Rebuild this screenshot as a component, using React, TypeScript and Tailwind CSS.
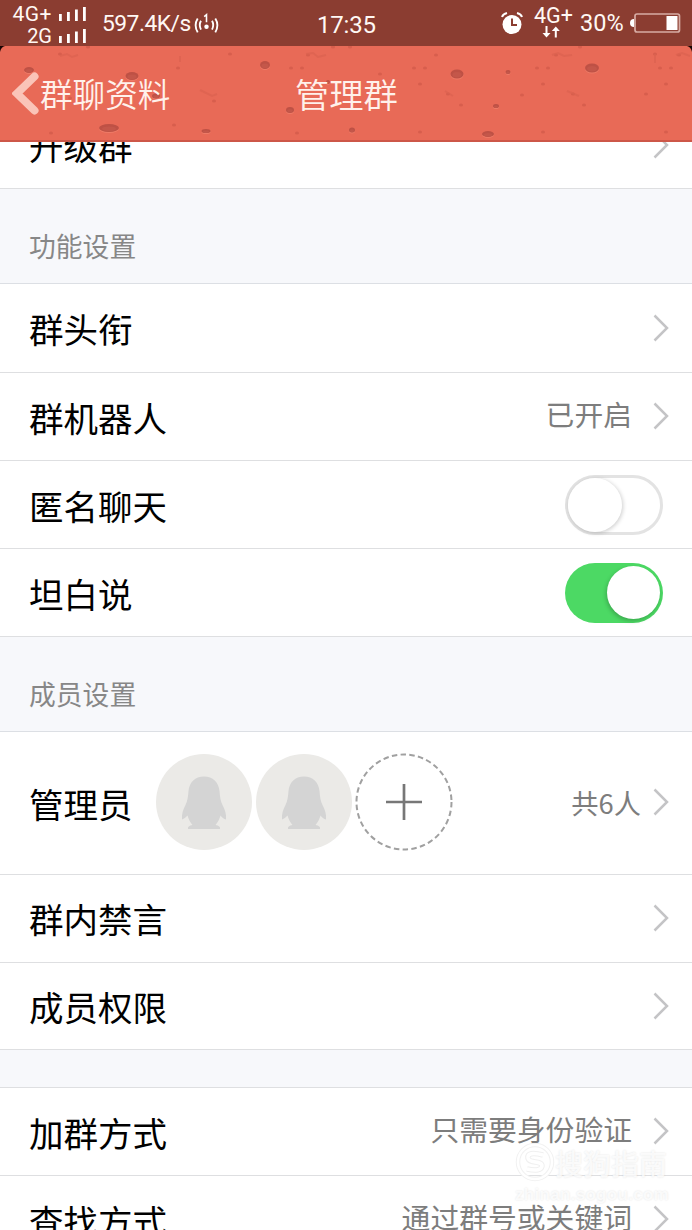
import React from "react";
import clsx from "clsx";

type RowProps = {
  label: string;
  className: string;
  value?: string;
  valueClass?: string;
  arrow?: boolean;
  children?: React.ReactNode;
};

const Chevron = () => (
  <svg width="18" height="28" viewBox="0 0 18 28" fill="none" className="shrink-0">
    <path d="M2.500 1.500L15 14L2.500 26.500" stroke="#c4c4c6" strokeWidth="2.500" />
  </svg>
);

const Row = ({ label, className, value, valueClass, arrow = true, children }: RowProps) => (
  <div className={clsx("flex shrink-0 items-center border-b border-[#dedfe1] bg-white pl-[29px]", className)}>
    <span className="pt-px text-[34.5px] leading-none text-black">{label}</span>
    {children}
    {arrow && (
      <div className="ml-auto flex items-center pr-[22px]">
        {value && (
          <span className={clsx("leading-none text-[#7d7d7d]", valueClass ?? "mr-[20px] pb-[5px] text-[28.8px]")}>
            {value}
          </span>
        )}
        <Chevron />
      </div>
    )}
  </div>
);

const Section = ({ title }: { title: string }) => (
  <div className="flex h-[95px] shrink-0 items-center border-b border-[#dcdfe4] bg-[#f7f8fb] pt-[21px] pl-[29px] text-[26.8px] leading-none text-[#878787]">
    {title}
  </div>
);

const Toggle = ({ on = false }: { on?: boolean }) => (
  <div
    className={clsx(
      "mr-[29px] ml-auto flex h-[60px] w-[98px] items-center rounded-full",
      on ? "justify-end bg-[#4cd964] pr-[3px]" : "border-[3px] border-[#e3e3e3] bg-white",
    )}
  >
    <div
      className={clsx(
        "rounded-full bg-white",
        on ? "size-[53px] shadow-[-1px_2px_4px_rgba(0,0,0,0.22)]" : "size-[54px] shadow-[1px_1px_4px_rgba(0,0,0,0.2)]",
      )}
    />
  </div>
);

const Avatar = () => (
  <svg width="96" height="96" viewBox="0 0 96 96">
    <circle cx="48" cy="48" r="48" fill="#ebeae7" />
    <path
      d="M48 22.500C39 22.500 33.500 28 32.500 37C32 43 31.500 47 29.500 51C27 56 25.500 60 26 65.500C28 65 30.500 62.500 31.500 61.500C32.500 65 34 68 36.500 71C33 71.500 31.500 73 32 75H64C64.500 73 63 71.500 59.500 71C62 68 63.500 65 64.500 61.500C65.500 63 68 65 70 65.500C70.500 60 69 56 66.500 51C64.500 47 64 43 63.500 37C62.500 28 57 22.500 48 22.500z"
      fill="#d4d4d4"
    />
  </svg>
);

const AddButton = () => (
  <svg width="98" height="98" viewBox="0 0 98 98" fill="none">
    <circle cx="49" cy="49" r="47.500" stroke="#a0a0a0" strokeWidth="2" strokeDasharray="5.500 3.300" />
    <path d="M31 49H67M49 31V67" stroke="#777" strokeWidth="2.700" />
  </svg>
);

const Signal = () => (
  <svg width="27" height="14" viewBox="0 0 27 14" fill="#fff">
    <path d="M0 7h2.800v7H0zM8 5h2.800v9H8zM16 2.500h2.800V14H16zM24 0h2.800v14H24z" />
  </svg>
);

const StatusBar = () => (
  <div className="relative flex h-[46px] shrink-0 items-center bg-[#8b3d31] font-[Roboto,sans-serif] text-[#fff8f4]">
    <div className="flex w-[86px] flex-col items-end gap-[2px] pt-[4px]">
      <div className="flex items-center gap-[7px] text-[21px] leading-[20px]">
        <span className="tracking-[0.500px]">4G+</span>
        <Signal />
      </div>
      <div className="flex items-center gap-[7px] text-[20px] leading-[20px]">
        2G <Signal />
      </div>
    </div>
    <span className="ml-[16px] w-[87px] pt-[2px] text-[22.800px] leading-none tracking-[-0.500px]">597.4K/s</span>
    <svg width="25" height="22" viewBox="0 0 27 22" fill="none" stroke="#fff" strokeWidth="2" className="mt-[2px] ml-[5px]">
      <path d="M7.500 7.500Q5 12 7.500 17M4 5Q-.500 12 4 20M19.500 7.500Q22 12 19.500 17M23 5Q27.500 12 23 20" />
      <path d="M11 3L13.500 1V9" strokeWidth="1.700" />
      <circle cx="13.500" cy="14" r="2.400" fill="#fff" stroke="none" />
    </svg>
    <span className="absolute top-[13px] left-[317px] text-[24px] leading-none tracking-[-0.200px]">17:35</span>
    <div className="ml-auto flex items-center pr-[11px]">
      <svg width="22" height="23" viewBox="0 0 22 23" fill="none">
        <circle cx="11" cy="12.500" r="9.500" fill="#fff" />
        <path d="M1 5Q2 2 6 1M21 5Q20 2 16 1" stroke="#fff" strokeWidth="2" />
        <path d="M11 6.500V13H16" stroke="#8b3d31" strokeWidth="2" />
      </svg>
      <div className="ml-[10px] flex w-[41px] flex-col items-center pb-[3px]">
        <span className="text-[21.500px] leading-[20px]">4G+</span>
        <svg width="18" height="12" viewBox="0 0 18 12" fill="#fff" className="mr-[6px]">
          <path d="M3.500 0h2v7H8.500L4.500 11.500.500 7h3zM12.800 11.500h2V5h3L13.800.500 9.800 5h3z" />
        </svg>
      </div>
      <span className="ml-[6px] w-[45px] pt-[2px] text-[23.500px] leading-none">30%</span>
      <svg width="51" height="20" viewBox="0 0 51 20" fill="none" className="ml-[5px]">
        <path d="M4 6v8Q0 14 0 10T4 6z" fill="#fff" />
        <rect x="5" y="1" width="44.500" height="18" rx="2" stroke="#d7aca4" strokeWidth="1.700" />
        <rect x="36.500" y="3" width="11" height="14" fill="#fff" />
      </svg>
    </div>
  </div>
);

// x, y, rx, ry of the craters in the header skin
const craters = [
  [29, 24, 5, 3],
  [132, 30, 6.5, 4],
  [109, 82, 10, 4],
  [206, 85, 4.5, 2],
  [265, 19, 5, 4],
  [290, 64, 4, 3],
  [352, 84, 3, 2.5],
  [328, 36, 2, 2],
  [457, 28, 6.5, 4.5],
  [508, 26, 2.5, 2],
  [496, 60, 3, 2],
  [488, 88, 6, 3],
  [592, 22, 7, 4.5],
  [156, 50, 4, 2.5],
];

const specks = [
  [60, 8], [88, 1], [178, 22], [163, 39], [70, 52], [128, 50], [51, 87], [174, 79], [230, 8], [214, 55],
  [302, 22], [308, 9], [333, 1], [291, 22], [297, 87], [380, 28], [420, 38], [448, 48], [425, 22], [414, 22],
  [420, 86], [350, 1], [436, 9], [548, 22], [537, 22], [543, 38], [556, 9], [573, 48], [584, 59], [543, 86],
  [671, 22], [660, 22], [666, 38], [679, 9], [646, 48], [666, 86], [580, 1], [655, 8], [522, 49], [461, 59],
];

const Header = () => (
  <div className="relative h-[96px] shrink-0 border-b-2 border-[#cd5748] bg-[#e86a57] text-[#fff1eb]">
    <svg width="692" height="95" viewBox="0 0 692 95" className="absolute inset-0">
      {craters.map(([x, y, rx, ry], i) => (
        <g key={i}>
          <ellipse cx={x} cy={y + 1} rx={rx} ry={ry} fill="#ee7b67" />
          <ellipse cx={x} cy={y} rx={rx} ry={ry} fill="#be5145" />
          <ellipse cx={x} cy={y + 0.8} rx={rx * 0.7} ry={ry * 0.6} fill="#c4574a" />
        </g>
      ))}
      {specks.map(([x, y], i) => (
        <ellipse key={i} cx={x} cy={y} rx="2" ry="1.500" fill="#d75e4d" />
      ))}
      <g stroke="#dc6250" strokeWidth="2" fill="none" opacity=".7">
        <path d="M60 10l7-2 5 3 6-2M306 8l7-1 5 4 8-2M552 9l6-2 6 3 8-1M676 9l6-2 8 3M200 44l12 6 5-2M445 45l8 5M567 45l12 5M180 10v6M655 8v9" />
      </g>
      <path d="M0 0H5Q1 1 0 6zM692 0h-5q4 1 5 6z" fill="#180504" />
    </svg>
    <div className="relative flex h-full items-center">
      <svg width="28" height="44" viewBox="0 0 28 44" fill="none" className="ml-[12px]">
        <path d="M22.500 5.500L5 22.500L22.500 39.500" stroke="#fac4b8" strokeWidth="8" strokeLinecap="round" strokeLinejoin="miter" />
      </svg>
      <span className="pt-px text-[32.600px] leading-none font-[350]">群聊资料</span>
      <span className="absolute left-[295px] text-[34.300px] leading-none font-[350]">管理群</span>
    </div>
  </div>
);

const Watermark = () => (
  <div className="absolute top-[1143px] left-[515px] w-[156px] text-white/80 [text-shadow:0_0_2px_rgba(0,0,0,0.12)]">
    <div className="flex items-center">
      <svg width="40" height="40" viewBox="0 0 40 40" fill="none">
        <circle cx="20" cy="19" r="17" stroke="#f1f1f1" strokeWidth="4.500" />
        <circle cx="20" cy="19" r="17" stroke="#fff" strokeWidth="2.500" />
        <path d="M28 12Q12 8 13 15C14 21 27 17 27 23Q26 29 12 26" stroke="#f0f0f0" strokeWidth="5.500" />
        <path d="M28 12Q12 8 13 15C14 21 27 17 27 23Q26 29 12 26" stroke="#fff" strokeWidth="3.500" />
      </svg>
      <span className="text-[28px] leading-none font-medium">搜狗指南</span>
    </div>
    <div className="mt-[3px] font-['Liberation_Sans',sans-serif] text-[17px] leading-none font-bold tracking-[0.300px]">
      zhinan.sogou.com
    </div>
  </div>
);

export default function App() {
  return (
    <div className="relative flex h-[1230px] w-[692px] flex-col overflow-hidden bg-white font-['Noto_Sans_CJK_SC',sans-serif] whitespace-nowrap">
      <StatusBar />
      <Header />
      <div className="flex h-[47px] shrink-0 flex-col justify-end overflow-hidden">
        <Row label="升级群" className="h-[88px]" />
      </div>
      <Section title="功能设置" />
      <Row label="群头衔" className="h-[89px]" />
      <Row label="群机器人" value="已开启" className="h-[88px]" />
      <Row label="匿名聊天" arrow={false} className="h-[88px]">
        <Toggle />
      </Row>
      <Row label="坦白说" arrow={false} className="h-[88px]">
        <Toggle on />
      </Row>
      <Section title="成员设置" />
      <Row label="管理员" value="共6人" valueClass="mr-[11px] pt-px text-[27.300px]" className="h-[143px] pb-px">
        <div className="ml-[23px] flex items-center pb-[2px]">
          <Avatar />
          <div className="mr-[3px] ml-[4px]">
            <Avatar />
          </div>
          <AddButton />
        </div>
      </Row>
      <Row label="群内禁言" className="h-[88px] pb-px" />
      <Row label="成员权限" className="h-[87px]" />
      <div className="h-[38px] shrink-0 border-b border-[#dedfe1] bg-[#f7f8fb]" />
      <Row label="加群方式" value="只需要身份验证" className="h-[88px]" />
      <Row label="查找方式" value="通过群号或关键词" className="h-[88px]" />
      <Watermark />
    </div>
  );
}
